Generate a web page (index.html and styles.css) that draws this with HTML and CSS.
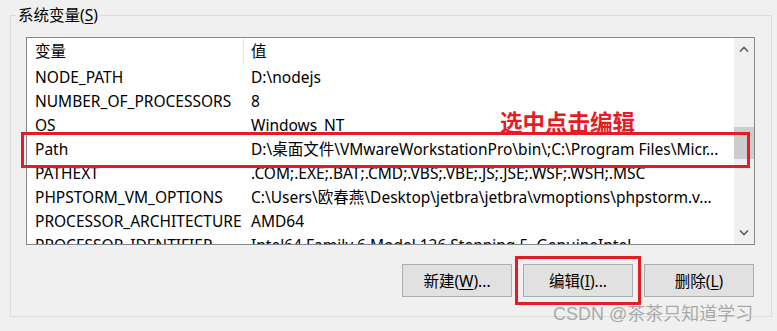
FILE: index.html
```html
<!DOCTYPE html>
<html lang="zh-CN">
<head>
    <meta charset="UTF-8">
    <title>系统变量</title>
    <link rel="stylesheet" href="styles.css">
</head>
<body>
    <div class="group">
        <span class="legend">系统变量(<u>S</u>)</span>

        <div class="listbox">
            <div class="grid">
                <div class="row head">
                    <div class="cell name">变量</div>
                    <div class="cell value">值</div>
                </div>
                <div class="row"><div class="cell name">NODE_PATH</div><div class="cell value">D:\nodejs</div></div>
                <div class="row"><div class="cell name">NUMBER_OF_PROCESSORS</div><div class="cell value">8</div></div>
                <div class="row"><div class="cell name">OS</div><div class="cell value">Windows_NT</div></div>
                <div class="row"><div class="cell name">Path</div><div class="cell value">D:\桌面文件\VMwareWorkstationPro\bin\;C:\Program Files\Micr...</div></div>
                <div class="row"><div class="cell name">PATHEXT</div><div class="cell value">.COM;.EXE;.BAT;.CMD;.VBS;.VBE;.JS;.JSE;.WSF;.WSH;.MSC</div></div>
                <div class="row"><div class="cell name">PHPSTORM_VM_OPTIONS</div><div class="cell value">C:\Users\欧春燕\Desktop\jetbra\jetbra\vmoptions\phpstorm.v...</div></div>
                <div class="row"><div class="cell name">PROCESSOR_ARCHITECTURE</div><div class="cell value">AMD64</div></div>
                <div class="row"><div class="cell name">PROCESSOR_IDENTIFIER</div><div class="cell value">Intel64 Family 6 Model 126 Stepping 5, GenuineIntel</div></div>
            </div>
            <div class="scrollbar">
                <div class="arrow">
                    <svg width="10" height="6" viewBox="0 0 10 6"><path d="M1 5.5 L5 1.5 L9 5.5" fill="none" stroke="#606060" stroke-width="1.6"/></svg>
                </div>
                <div class="track">
                    <div class="thumb"></div>
                </div>
                <div class="arrow">
                    <svg width="10" height="6" viewBox="0 0 10 6"><path d="M1 0.5 L5 4.5 L9 0.5" fill="none" stroke="#606060" stroke-width="1.6"/></svg>
                </div>
            </div>
        </div>

        <div class="buttons">
            <button class="btn">新建(<u>W</u>)...</button>
            <button class="btn marked">编辑(<u>I</u>)...</button>
            <button class="btn">删除(<u>L</u>)</button>
        </div>

        <!-- annotations drawn over the dialog -->
        <div class="row-mark"></div>
        <div class="note">选中点击编辑</div>
    </div>

    <div class="watermark">CSDN @茶茶只知道学习</div>
</body>
</html>
```

FILE: styles.css
```css
body {
    margin: 0;
    background-color: #f0f0f0;
    font-family: "Noto Sans", "Noto Sans CJK SC", sans-serif;
    font-size: 15.5px;
    color: #000;
    position: relative;
    width: 777px;
    height: 331px;
    overflow: hidden;
}
.group {
    position: relative;
    margin: 15px 0 0 10px;
    width: 762px;
    height: 302px;
    box-sizing: border-box;
    border: 1px solid #dcdcdc;
    padding: 21px 16px 0 15px;
}
.legend {
    position: absolute;
    top: -11px;
    left: 5px;
    padding: 0 2px;
    background-color: #f0f0f0;
    line-height: 20px;
}
.legend u {
    text-underline-offset: 2px;
}
.listbox {
    display: flex;
    height: 208px;
    box-sizing: border-box;
    border: 1px solid #828790;
    background-color: #fff;
}
.grid {
    flex: 1;
    overflow: hidden;
}
.row {
    display: flex;
    height: 24px;
    line-height: 24px;
    white-space: nowrap;
}
.row.head {
    height: 27px;
    line-height: 27px;
}
.cell.name {
    width: 217px;
    padding-left: 8px;
    box-sizing: border-box;
}
.cell.value {
    padding-left: 7px;
}
.head .cell.name {
    border-right: 1px solid #e5e5e5;
    margin: 1px 0;
    line-height: 25px;
}
.scrollbar {
    width: 20px;
    display: flex;
    flex-direction: column;
    background-color: #f0f0f0;
}
.arrow {
    height: 22px;
    display: flex;
    align-items: center;
    justify-content: center;
}
.track {
    flex: 1;
    padding-top: 67px;
}
.thumb {
    height: 32px;
    background-color: #cdcdcd;
}
.buttons {
    display: flex;
    justify-content: flex-end;
    gap: 11px;
    margin-top: 19px;
    padding-right: 1px;
}
.btn {
    width: 110px;
    height: 33px;
    font-family: inherit;
    font-size: 15.5px;
    color: #000;
    background-color: #e1e1e1;
    border: 1px solid #adadad;
    padding: 0;
}
.btn u {
    text-underline-offset: 2px;
}
.btn.marked {
    outline: 3px solid #e51c23;
    outline-offset: 5px;
}
.row-mark {
    position: absolute;
    left: 10px;
    top: 116px;
    width: 729px;
    height: 36px;
    box-sizing: border-box;
    border: 3px solid #e51c23;
}
.note {
    position: absolute;
    left: 489px;
    top: 90px;
    font-size: 22.5px;
    font-weight: bold;
    color: #e51c23;
    line-height: 30px;
    font-family: "Noto Sans CJK SC", sans-serif;
}
.watermark {
    position: absolute;
    left: 553px;
    top: 299px;
    font-size: 18px;
    color: rgba(120, 120, 120, 0.6);
    font-family: "Liberation Sans", "Noto Sans CJK SC", sans-serif;
}
```
